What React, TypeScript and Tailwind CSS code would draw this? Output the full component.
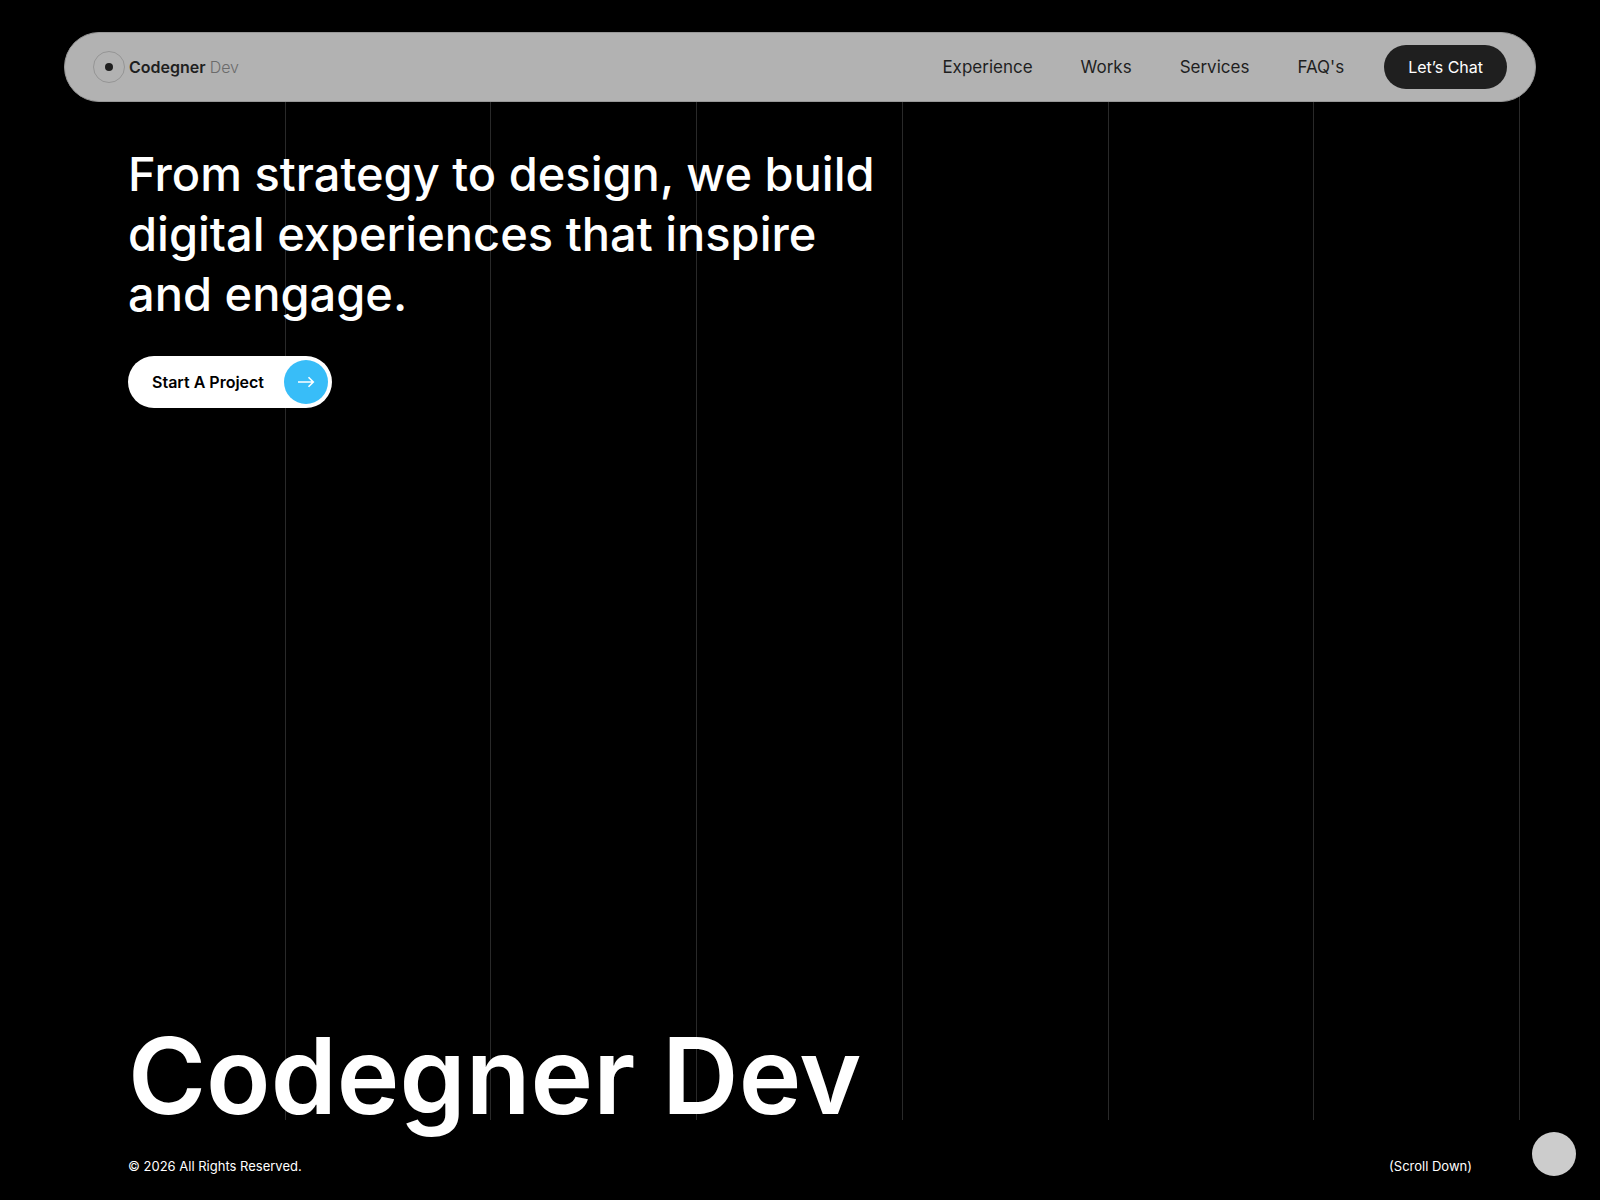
import React from 'react';

const NAV_LINKS = [
    { label: 'Experience', href: '#experience' },
    { label: 'Works', href: '#works' },
    { label: 'Services', href: '#services' },
    { label: "FAQ's", href: '#faqs' },
];

const GridLines: React.FC = () => (
    <div className="pointer-events-none absolute inset-x-20 top-20 bottom-20 grid grid-cols-7" aria-hidden="true">
        {Array.from({ length: 7 }).map((_, i) => (
            <div key={i} className="border-r border-[#292929]" />
        ))}
    </div>
);

const Logo: React.FC = () => (
    <a href="#home" className="flex items-center gap-1">
        <span className="flex h-8 w-8 items-center justify-center rounded-full border border-[#959595]">
            <span className="h-2 w-2 rounded-full bg-[#1f1f1f]" />
        </span>
        <span className="text-base font-semibold text-[#1f1f1f]">
            Codegner <span className="font-light text-[#6b6b6b]">Dev</span>
        </span>
    </a>
);

const Header: React.FC = () => (
    <header className="relative z-10 mx-16 mt-8 flex h-[70px] items-center justify-between rounded-full border border-[#989898] bg-[#b2b2b2] px-7">
        <Logo />
        <div className="flex items-center gap-10">
            <nav className="flex items-center gap-12">
                {NAV_LINKS.map(link => (
                    <a key={link.label} href={link.href} className="text-[17px]/7 font-normal text-[#1f1f1f]">
                        {link.label}
                    </a>
                ))}
            </nav>
            <button type="button" className="h-11 rounded-full bg-[#1f1f1f] px-6 text-base text-white">
                Let’s Chat
            </button>
        </div>
    </header>
);

export default function App() {
    return (
        <div className="relative flex min-h-screen flex-col bg-black font-['Inter',sans-serif] text-white">
            <GridLines />
            <Header />

            <main className="relative flex flex-1 flex-col justify-between px-32 pt-[42px]">
                <div>
                    <h2 className="max-w-[760px] text-[47px]/[60px] font-medium">
                        From strategy to design, we build digital experiences that inspire and engage.
                    </h2>
                    <button
                        type="button"
                        className="mt-8 flex h-[52px] items-center gap-5 rounded-full bg-white pr-1 pl-6 text-base font-semibold text-black"
                    >
                        Start A Project
                        <span className="flex h-11 w-11 items-center justify-center rounded-full bg-[#38bdf8]">
                            <svg width="18" height="12" viewBox="0 0 18 12" fill="none" stroke="white" strokeWidth="1.6">
                                <path d="M1 6h15M11.5 1.2 16.3 6l-4.8 4.8" />
                            </svg>
                        </span>
                    </button>
                </div>
                <h1 className="text-[106px]/[112px] font-semibold">Codegner Dev</h1>
            </main>

            <footer className="relative flex items-center justify-between px-32 py-6 text-[13px]/5">
                <p>© 2026 All Rights Reserved.</p>
                <a href="#works">(Scroll Down)</a>
            </footer>

            <button
                type="button"
                aria-label="Back to top"
                className="fixed right-6 bottom-6 h-11 w-11 rounded-full bg-[#cccccc]"
            />
        </div>
    );
}
